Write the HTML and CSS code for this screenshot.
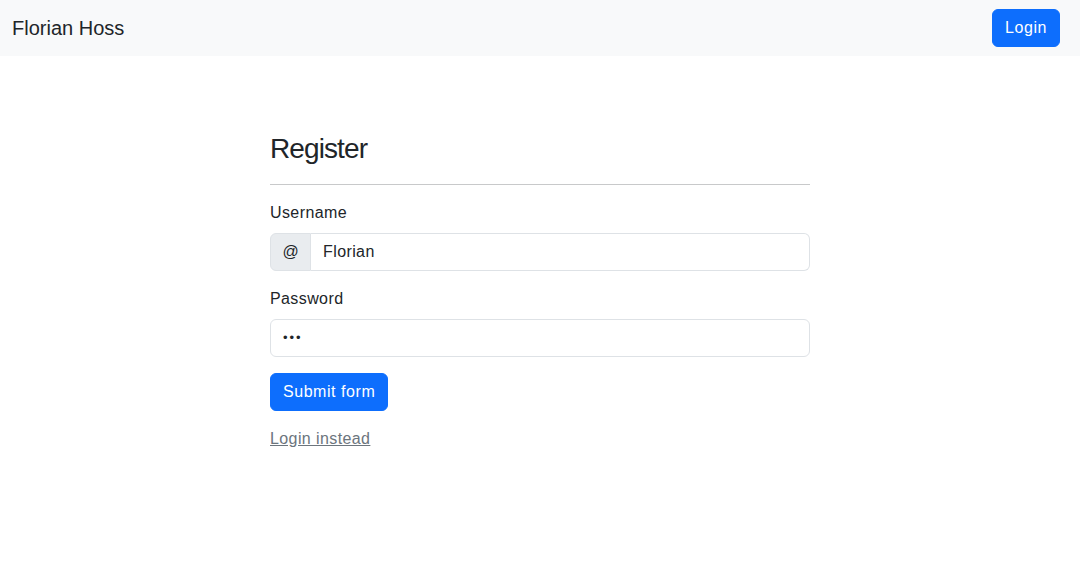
FILE: index.html
```html
<!DOCTYPE html>
<html lang="en">
<head>
<meta charset="utf-8">
<title>Register</title>
<link rel="stylesheet" href="styles.css">
</head>
<body>
<nav class="navbar">
  <a class="brand" href="#">Florian Hoss</a>
  <button class="btn btn-primary" type="button">Login</button>
</nav>
<main class="main">
  <form class="form">
    <h3 class="title">Register</h3>
    <hr class="divider">
    <div class="field">
      <label class="label" for="username">Username</label>
      <div class="input-group">
        <span class="addon">@</span>
        <input class="control control-grouped" id="username" type="text" value="Florian">
      </div>
    </div>
    <div class="field">
      <label class="label" for="password">Password</label>
      <input class="control control-password" id="password" type="password" value="abc">
    </div>
    <button class="btn btn-primary" type="submit">Submit form</button>
    <a class="alt-link" href="#">Login instead</a>
  </form>
</main>
</body>
</html>
```
FILE: styles.css
```css
* { box-sizing: border-box; }
html, body { margin: 0; padding: 0; }
body {
  font-family: "Liberation Sans", Arial, sans-serif;
  font-size: 16px;
  line-height: 1.5;
  color: #212529;
  background: #fff;
  letter-spacing: 0.4px;
}
.navbar {
  height: 56px;
  background: #f8f9fa;
  display: flex;
  align-items: center;
  justify-content: space-between;
  padding: 0 20px 0 12px;
}
.brand {
  font-size: 20px;
  color: #212529;
  text-decoration: none;
  line-height: 30px;
  letter-spacing: 0;
}
.btn {
  font-family: inherit;
  font-size: 16px;
  line-height: 24px;
  padding: 6px 12px;
  border: 1px solid transparent;
  border-radius: 6px;
  cursor: pointer;
  letter-spacing: 0.55px;
}
.btn-primary {
  background: #0d6efd;
  border-color: #0d6efd;
  color: #fff;
}
.main {
  display: flex;
  justify-content: center;
  padding-top: 76px;
}
.form {
  width: 540px;
  display: flex;
  flex-direction: column;
  align-items: flex-start;
}
.title {
  font-size: 28px;
  font-weight: 400;
  line-height: 1.2;
  margin: 0;
  letter-spacing: -0.9px;
}
.divider {
  align-self: stretch;
  border: 0;
  border-top: 1px solid #c8c9ca;
  margin: 18px 0 16px;
}
.field {
  align-self: stretch;
  margin-bottom: 16px;
}
.label {
  display: block;
  margin-bottom: 8px;
}
.input-group {
  display: flex;
}
.addon {
  display: flex;
  align-items: center;
  justify-content: center;
  width: 41px;
  flex: none;
  padding: 6px 0;
  background: #e9ecef;
  border: 1px solid #dee2e6;
  border-radius: 6px 0 0 6px;
  line-height: 24px;
  letter-spacing: 0;
}
.control {
  display: block;
  width: 100%;
  font-family: inherit;
  font-size: 16px;
  line-height: 24px;
  padding: 6px 12px;
  color: #212529;
  background: #fff;
  border: 1px solid #dee2e6;
  border-radius: 6px;
  outline: none;
  letter-spacing: 0.4px;
}
.control-grouped {
  flex: 1;
  border-left: 0;
  border-radius: 0 6px 6px 0;
}
.control-password {
  letter-spacing: 2px;
  font-size: 13px;
  padding-top: 7px;
  padding-bottom: 7px;
  height: 38px;
}
.alt-link {
  margin-top: 16px;
  color: #6c757d;
  text-decoration: underline;
}
```
